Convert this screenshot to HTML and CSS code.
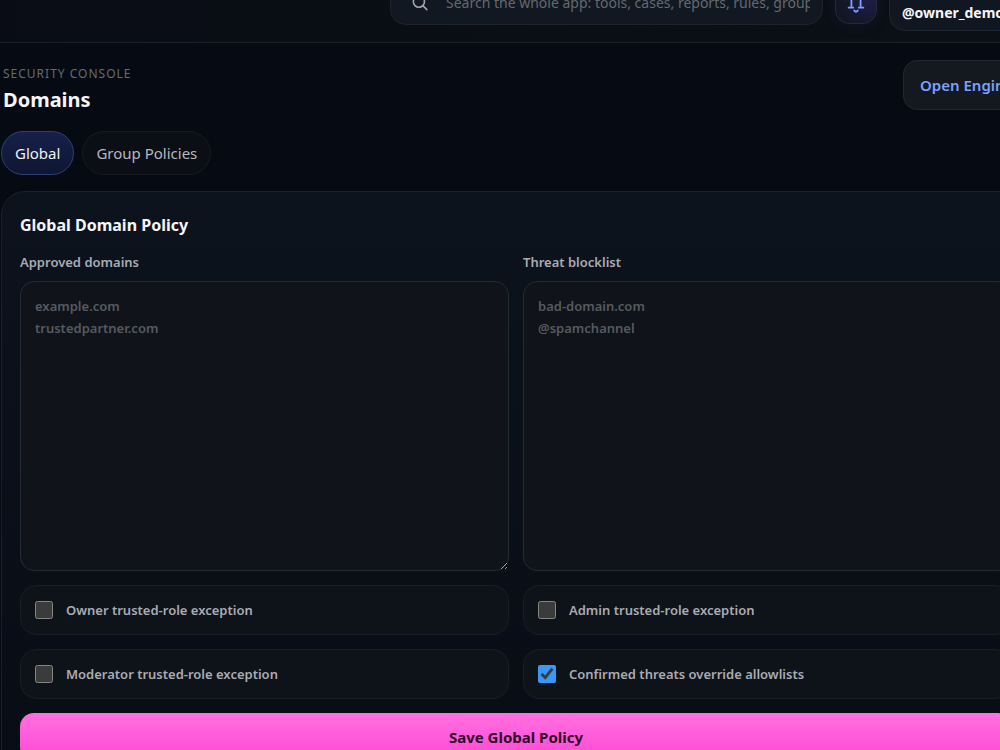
FILE: index.html
```html
<!DOCTYPE html>
<html lang="en">
  <head>
    <meta charset="UTF-8" />
    <title>Domains - Security Console</title>
    <link rel="stylesheet" href="styles.css">
  </head>
  <body>
    <div class="app">
      <header class="topbar">
        <label class="search">
          <svg class="search-icon" viewBox="0 0 24 24" aria-hidden="true">
            <circle cx="10" cy="11" r="7" />
            <path d="M15 16l5 5" />
          </svg>
          <input type="text" aria-label="Search" placeholder="Search the whole app: tools, cases, reports, rules, groups" />
        </label>
        <button class="icon-button" type="button" aria-label="Notifications">
          <svg viewBox="0 0 24 24" aria-hidden="true">
            <path d="M7 16V9a5 5 0 0 1 10 0v7" />
            <path d="M4 17h5M15 17h5" />
            <path d="M10 20c.6 2 3.400 2 4 0" />
          </svg>
        </button>
        <button class="user-chip" type="button">
          <span class="user-role">Owner</span>
          <span class="user-name">@owner_demo</span>
        </button>
      </header>

      <main class="page">
        <div class="page-head">
          <div>
            <div class="eyebrow">Security Console</div>
            <h1>Domains</h1>
          </div>
          <a class="engine-link" href="#engine">Open Engine</a>
        </div>

        <nav class="tabs">
          <a class="tab active" href="#global">Global</a>
          <a class="tab" href="#groups">Group Policies</a>
        </nav>

        <form class="panel">
          <h2>Global Domain Policy</h2>
          <div class="grid">
            <div class="field">
              <label for="approved">Approved domains</label>
              <textarea id="approved" placeholder="example.com&#10;trustedpartner.com"></textarea>
            </div>
            <div class="field">
              <label for="blocklist">Threat blocklist</label>
              <textarea id="blocklist" placeholder="bad-domain.com&#10;@spamchannel"></textarea>
            </div>
            <label class="check"><input type="checkbox" /> Owner trusted-role exception</label>
            <label class="check"><input type="checkbox" /> Admin trusted-role exception</label>
            <label class="check"><input type="checkbox" /> Moderator trusted-role exception</label>
            <label class="check"><input type="checkbox" checked /> Confirmed threats override allowlists</label>
          </div>
          <button class="save" type="button">Save Global Policy</button>
        </form>
      </main>
    </div>
  </body>
</html>
```

FILE: styles.css
```css
* {
  box-sizing: border-box;
}
html {
  color-scheme: dark;
}
body {
  margin: 0;
  overflow: hidden;
  background: #060a12;
  color: #f5f6fa;
  font-family: "Noto Sans", "Open Sans", sans-serif;
  font-size: 14px;
  line-height: 22px;
}
button,
input,
textarea {
  font: inherit;
}
a {
  text-decoration: none;
}

/* The app runs past the right and top edges of the window */
.app {
  margin-top: -37px;
  margin-right: -31px;
}

.topbar {
  display: flex;
  align-items: center;
  justify-content: flex-end;
  gap: 12px;
  height: 80px;
  border-bottom: 1px solid #1b2028;
  background: linear-gradient(90deg, #090c14, #0b1016);
}
.search {
  display: flex;
  align-items: center;
  gap: 16px;
  width: 42%;
  height: 44px;
  padding: 0 12px 0 20px;
  border: 1px solid #1e242d;
  border-radius: 16px;
  background: #111821;
}
.search-icon {
  flex: none;
  width: 19px;
  height: 19px;
  fill: none;
  stroke: #a2a6ae;
  stroke-width: 2;
  stroke-linecap: round;
}
.search input {
  flex: 1;
  min-width: 0;
  padding: 0;
  border: 0;
  outline: 0;
  background: none;
  color: #f5f6fa;
}
::placeholder {
  color: #64686f;
}
.icon-button {
  display: grid;
  place-items: center;
  width: 42px;
  height: 43px;
  padding: 0;
  border: 1px solid #222938;
  border-radius: 14px;
  background: radial-gradient(circle at 80% 40%, #1e1e49, #111723 75%);
  box-shadow: 0 0 16px rgba(70, 60, 200, 0.12);
}
.icon-button svg {
  width: 22px;
  height: 22px;
  fill: none;
  stroke: #7f9eff;
  stroke-width: 2;
  stroke-linecap: round;
}
.user-chip {
  display: flex;
  flex-direction: column;
  align-items: flex-start;
  justify-content: center;
  width: 142px;
  height: 56px;
  padding: 0 12px;
  border: 1px solid #202730;
  border-radius: 16px;
  background: #101721;
  color: #f5f6fa;
}
.user-role {
  color: #8f949e;
  font-size: 12px;
  line-height: 20px;
}
.user-name {
  font-weight: 700;
  line-height: 22px;
}

.page {
  padding: 17px 0 24px 1px;
}
.page-head {
  display: flex;
  align-items: flex-start;
  justify-content: space-between;
  padding-left: 2px;
}
.eyebrow {
  margin-top: 5px;
  color: #666a72;
  font-size: 12px;
  line-height: 18px;
  letter-spacing: 1px;
  text-transform: uppercase;
}
h1 {
  margin: 3px 0 0;
  font-size: 20px;
  line-height: 28px;
}
.engine-link {
  padding: 13px 16px;
  width: 128px;
  border: 1px solid #22262e;
  border-radius: 14px;
  background: #14181f;
  color: #7ba1ff;
  font-size: 15px;
  font-weight: 600;
  line-height: 22px;
}

.tabs {
  display: flex;
  gap: 8px;
  margin: 17px 0 16px;
}
.tab {
  padding: 10px 13px;
  border: 1px solid #171b21;
  border-radius: 22px;
  background: #0b0f15;
  color: #b5b8be;
  font-size: 15px;
}
.tab.active {
  border-color: #2b4077;
  background: linear-gradient(#16214a, #0e1630);
  color: #eef0f8;
}

.panel {
  padding: 18px;
  border: 1px solid #1a2029;
  border-radius: 24px;
  background: linear-gradient(#0c131d, #080c15);
}
h2 {
  margin: 4px 0 15px;
  font-size: 16px;
  line-height: 22px;
}
.grid {
  display: grid;
  grid-template-columns: 1fr 1fr;
  gap: 14px;
}
.field {
  display: flex;
  flex-direction: column;
  gap: 8px;
}
.field label,
.check {
  color: #a9acb3;
  font-size: 13px;
  font-weight: 600;
}
textarea {
  height: 290px;
  padding: 13px 14px;
  border: 1px solid #262a31;
  border-radius: 14px;
  outline: 0;
  background: #101319;
  color: #f5f6fa;
  font-size: 13px;
  font-weight: 600;
  resize: vertical;
}
textarea::placeholder {
  color: #565a60;
}
.check {
  display: flex;
  align-items: center;
  gap: 13px;
  height: 50px;
  padding: 0 14px;
  border: 1px solid #191d24;
  border-radius: 16px;
  background: #0e1219;
}
.check input {
  width: 18px;
  height: 18px;
  margin: 0;
  accent-color: #3897f7;
}
.save {
  width: 100%;
  height: 48px;
  margin-top: 14px;
  border: 0;
  border-radius: 14px;
  background: linear-gradient(#ff70e0, #ff47d5);
  color: #2b0826;
  font-size: 15px;
  font-weight: 700;
}
```
